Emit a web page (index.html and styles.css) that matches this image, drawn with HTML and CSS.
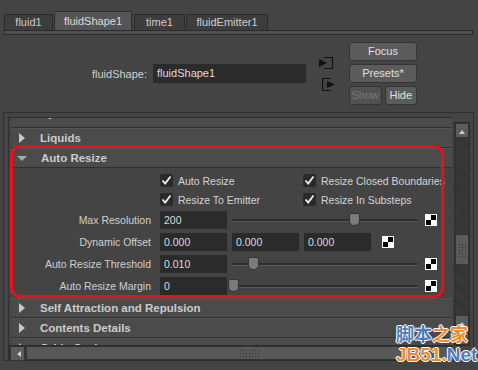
FILE: index.html
```html
<!DOCTYPE html>
<html lang="en">

<head>
    <meta charset="UTF-8">
    <title>Attribute Editor</title>
    <link rel="stylesheet" href="styles.css">
</head>

<body>
    <div class="editor">
        <div class="tabs">
            <div class="tab t1">fluid1</div>
            <div class="tab active t2">fluidShape1</div>
            <div class="tab t3">time1</div>
            <div class="tab t4">fluidEmitter1</div>
        </div>
        <div class="tab-strip"></div>

        <div class="node-row">
            <div class="node-label">fluidShape:</div>
            <div class="field node-field">fluidShape1</div>
            <div class="io-icons">
                <svg width="16" height="12" viewBox="0 0 16 12">
                    <path d="M6 0.5 H14.5 V11.5 H6" fill="none" stroke="#111" stroke-width="1.2"/>
                    <path d="M1 2 L9 6 L1 10 Z" fill="#111"/>
                </svg>
                <svg width="15" height="13" viewBox="0 0 15 13">
                    <path d="M9 0.5 H0.5 V12.5 H9" fill="none" stroke="#111" stroke-width="1.2"/>
                    <path d="M5 3 L13 6.5 L5 10 Z" fill="#111"/>
                </svg>
            </div>
            <div class="btn-col">
                <div class="btn">Focus</div>
                <div class="btn">Presets*</div>
                <div class="btn-pair">
                    <div class="btn disabled">Show</div>
                    <div class="btn">Hide</div>
                </div>
            </div>
        </div>

        <div class="panel">
            <div class="viewport">
                <div class="sections">
                    <div class="section-head cut"><span class="head-text">Dynamic Simulation</span></div>
                    <div class="section-head"><span class="tri closed"></span><span class="head-text">Liquids</span></div>
                    <div class="section-head"><span class="tri open"></span><span class="head-text">Auto Resize</span></div>

                    <div class="section-body">
                        <div class="check-row">
                            <div class="check-item"><span class="box"><svg width="11" height="11" viewBox="0 0 11 11"><path d="M1.5 5.5 L4.2 8.5 L9.5 1.5" fill="none" stroke="#f0f0f0" stroke-width="1.8"/></svg></span>Auto Resize</div>
                            <div class="check-item"><span class="box"><svg width="11" height="11" viewBox="0 0 11 11"><path d="M1.5 5.5 L4.2 8.5 L9.5 1.5" fill="none" stroke="#f0f0f0" stroke-width="1.8"/></svg></span>Resize Closed Boundaries</div>
                        </div>
                        <div class="check-row">
                            <div class="check-item"><span class="box"><svg width="11" height="11" viewBox="0 0 11 11"><path d="M1.5 5.5 L4.2 8.5 L9.5 1.5" fill="none" stroke="#f0f0f0" stroke-width="1.8"/></svg></span>Resize To Emitter</div>
                            <div class="check-item"><span class="box"><svg width="11" height="11" viewBox="0 0 11 11"><path d="M1.5 5.5 L4.2 8.5 L9.5 1.5" fill="none" stroke="#f0f0f0" stroke-width="1.8"/></svg></span>Resize In Substeps</div>
                        </div>

                        <div class="attr-row">
                            <div class="attr-label">Max Resolution</div>
                            <div class="field num">200</div>
                            <div class="slider"><span class="handle" style="left: 117px"></span></div>
                            <span class="map-btn"></span>
                        </div>
                        <div class="attr-row">
                            <div class="attr-label">Dynamic Offset</div>
                            <div class="field num">0.000</div>
                            <div class="field num">0.000</div>
                            <div class="field num">0.000</div>
                            <span class="map-btn offset-map"></span>
                        </div>
                        <div class="attr-row">
                            <div class="attr-label">Auto Resize Threshold</div>
                            <div class="field num">0.010</div>
                            <div class="slider"><span class="handle" style="left: 16px"></span></div>
                            <span class="map-btn"></span>
                        </div>
                        <div class="attr-row">
                            <div class="attr-label">Auto Resize Margin</div>
                            <div class="field num">0</div>
                            <div class="slider"><span class="handle" style="left: -4px"></span></div>
                            <span class="map-btn"></span>
                        </div>
                    </div>

                    <div class="section-head"><span class="tri closed"></span><span class="head-text">Self Attraction and Repulsion</span></div>
                    <div class="section-head"><span class="tri closed"></span><span class="head-text">Contents Details</span></div>
                    <div class="section-head"><span class="tri closed"></span><span class="head-text">Grids Cache</span></div>
                </div>

                <div class="hscroll">
                    <span class="sb-btn left-btn"></span>
                    <div class="hthumb"><span class="grip"></span></div>
                </div>
            </div>

            <div class="vscroll">
                <span class="sb-btn up-btn"></span>
                <div class="vtrack"><div class="vthumb"><span class="grip vgrip"></span></div></div>
                <span class="sb-btn up-btn"></span>
                <span class="sb-btn down-btn"></span>
            </div>

            <div class="highlight"></div>
        </div>

        <div class="watermark">
            <div class="wm-cn"><span class="blue">脚本</span><span class="orange">之家</span></div>
            <div class="wm-en"><span class="orange">JB51.</span><span class="blue">Net</span></div>
        </div>
    </div>
</body>

</html>
```

FILE: styles.css
```css
body {
    margin: 0;
    background: #444444;
    font-family: "Liberation Sans", Arial, sans-serif;
    font-size: 10.5px;
    color: #cfcfcf;
}

.editor {
    position: relative;
    width: 478px;
    height: 370px;
    overflow: hidden;
}

/* tabs */

.tabs {
    display: flex;
    align-items: flex-end;
    height: 30px;
    padding-left: 4px;
    font-size: 11px;
}

.tab {
    height: 15px;
    line-height: 15px;
    text-align: center;
    background: #3d3d3d;
    border: 1px solid #2c2c2c;
    border-bottom: none;
    border-radius: 2px 2px 0 0;
    margin-right: 1px;
    color: #cccccc;
}

.tab.active {
    height: 18px;
    line-height: 18px;
    background: #555555;
    color: #dddddd;
}

.t1 { width: 47px; }
.t2 { width: 76px; }
.t3 { width: 49px; margin-left: 1px; }
.t4 { width: 80px; }

.tab-strip {
    margin: 0 5px 0 3px;
    height: 3px;
    border: 1px solid #2c2c2c;
    background: #4f4f4f;
}

/* node name area */

.node-row {
    display: flex;
    align-items: center;
    height: 63px;
    padding: 7px 0;
    font-size: 11px;
}

.node-label {
    width: 147px;
    text-align: right;
    color: #d0d0d0;
}

.field {
    height: 19px;
    line-height: 19px;
    background: #2b2b2b;
    color: #dcdcdc;
    padding-left: 4px;
    box-sizing: border-box;
}

.node-field {
    width: 153px;
    margin-left: 6px;
}

.io-icons {
    display: flex;
    flex-direction: column;
    gap: 9px;
    margin-left: 12px;
    width: 19px;
}

.io-icons svg:last-child {
    margin-left: 4px;
}

.btn-col {
    display: flex;
    flex-direction: column;
    gap: 3px;
    margin-left: 12px;
    width: 68px;
}

.btn-pair {
    display: flex;
    gap: 3px;
}

.btn {
    flex: 1;
    height: 17px;
    line-height: 17px;
    text-align: center;
    background: #5b5b5b;
    border: 1px solid #343434;
    border-radius: 3px;
    color: #e0e0e0;
}

.btn.disabled {
    color: #7a7a7a;
    background: #515151;
}

/* main panel */

.panel {
    position: relative;
    display: flex;
    margin: 0 4px 0 3px;
    height: 249px;
    border: 1px solid #303030;
    box-sizing: border-box;
    padding: 4px 3px 0 4px;
    gap: 2px;
}

.viewport {
    display: flex;
    flex-direction: column;
    width: 445px;
    height: 244px;
    border-top: 1px solid #303030;
    border-left: 1px solid #303030;
    box-sizing: border-box;
}

.sections {
    height: 227px;
    overflow: hidden;
}

.section-head {
    display: flex;
    align-items: center;
    height: 20px;
    box-sizing: border-box;
    margin-left: 2px;
    background: #4b4b4b;
    border-bottom: 1px solid #303030;
    border-top: 1px solid #555555;
    font-weight: bold;
    font-size: 11.5px;
    color: #cbcbcb;
    white-space: nowrap;
}

.section-head.cut {
    height: 10px;
    align-items: flex-start;
    overflow: hidden;
    border-top: none;
    padding-left: 29px;
}

.section-head.cut .head-text {
    margin-top: -11px;
}

.tri {
    width: 0;
    height: 0;
    margin-left: 8px;
    margin-right: 15px;
}

.tri.closed {
    border-top: 5px solid transparent;
    border-bottom: 5px solid transparent;
    border-left: 6px solid #c8c8c8;
}

.tri.open {
    margin-left: 6px;
    margin-right: 14px;
    border-left: 5px solid transparent;
    border-right: 5px solid transparent;
    border-top: 5px solid #a9a9a9;
}

.section-body {
    padding: 3px 0 1px;
    height: 130px;
    box-sizing: border-box;
}

.check-row {
    display: flex;
    height: 19px;
    align-items: center;
    padding-left: 151px;
}

.check-item {
    display: flex;
    align-items: center;
    width: 143px;
    color: #d4d4d4;
    white-space: nowrap;
}

.box {
    display: flex;
    align-items: center;
    justify-content: center;
    flex: none;
    width: 13px;
    height: 13px;
    background: #2a2a2a;
    border-radius: 2px;
    margin-right: 5px;
}

.attr-row {
    display: flex;
    align-items: center;
    height: 22px;
    gap: 5px;
}

.attr-label {
    width: 142px;
    text-align: right;
    margin-right: 4px;
    color: #cfcfcf;
}

.num {
    width: 67px;
    height: 18px;
    line-height: 18px;
}

.slider {
    position: relative;
    width: 186px;
    height: 2px;
    background: #2e2e2e;
    border-bottom: 1px solid #5a5a5a;
    margin-right: 2px;
}

.handle {
    position: absolute;
    top: -6px;
    width: 9px;
    height: 11px;
    background: #7a7a7a;
    border: 1px solid #333;
    border-radius: 2px 2px 5px 5px;
}

.map-btn {
    width: 12px;
    height: 12px;
    box-sizing: border-box;
    border: 1px solid #ffffff;
    background:
        linear-gradient(#000, #000) top right / 5px 5px no-repeat,
        linear-gradient(#000, #000) bottom left / 5px 5px no-repeat,
        #ffffff;
}

.offset-map {
    margin-left: 6px;
}

/* scrollbars */

.hscroll {
    display: flex;
    height: 16px;
    background: #3b3b3b;
    border: 1px solid #2c2c2c;
    box-sizing: border-box;
}

.sb-btn {
    display: block;
    width: 15px;
    height: 15px;
    background: #5b5b5b;
    position: relative;
    box-sizing: border-box;
    border: 1px solid #333;
}

.left-btn::after,
.up-btn::after,
.down-btn::after {
    content: "";
    position: absolute;
    border: 3px solid transparent;
}

.left-btn::after {
    left: 3px;
    top: 4px;
    border-right: 4px solid #cfcfcf;
}

.up-btn::after {
    left: 3px;
    top: 3px;
    border-bottom: 4px solid #cfcfcf;
}

.down-btn::after {
    left: 3px;
    top: 5px;
    border-top: 4px solid #cfcfcf;
}

.hthumb {
    flex: 1;
    display: flex;
    justify-content: center;
    align-items: center;
    background: #585858;
    border: 1px solid #333;
    margin-left: 1px;
}

.grip {
    width: 20px;
    height: 8px;
    background-image: radial-gradient(circle, #2f2f2f 0.8px, transparent 1px);
    background-size: 3px 3px;
    margin-left: 20px;
}

.vscroll {
    display: flex;
    flex-direction: column;
    width: 16px;
    margin-top: 5px;
    height: 224px;
    background: repeating-linear-gradient(45deg, #3a3a3a 0 1px, #333 1px 2px);
    border: 1px solid #2c2c2c;
    box-sizing: border-box;
}

.vtrack {
    flex: 1;
    padding-top: 96px;
}

.vthumb {
    height: 29px;
    background: #5a5a5a;
    border: 1px solid #333;
    display: flex;
    align-items: center;
    justify-content: center;
}

.vgrip {
    width: 8px;
    height: 14px;
    margin: 0;
}

.up-btn,
.down-btn {
    width: 14px;
}

/* annotation overlay */

.highlight {
    position: absolute;
    left: 6px;
    top: 32px;
    width: 434px;
    height: 153px;
    box-sizing: border-box;
    border: 3px solid #e8101a;
    border-radius: 10px;
}

.watermark {
    position: absolute;
    left: 396px;
    top: 323px;
    font-weight: bold;
    line-height: 21px;
    text-shadow: 1px 0 #fff, -1px 0 #fff, 0 1px #fff, 0 -1px #fff;
}

.wm-cn {
    font-family: "Noto Sans CJK SC", sans-serif;
    font-size: 18px;
}

.wm-en {
    font-family: "Liberation Sans", Arial, sans-serif;
    font-size: 19px;
}

.blue {
    color: #4f7fb8;
}

.orange {
    color: #f08a2c;
}
```
